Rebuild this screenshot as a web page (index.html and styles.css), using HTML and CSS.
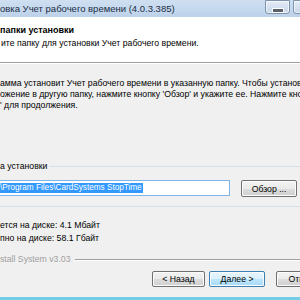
FILE: index.html
```html
<!DOCTYPE html>
<html lang="ru">
<head>
    <meta charset="UTF-8">
    <title>Установка Учет рабочего времени</title>
    <link rel="stylesheet" href="styles.css">
</head>
<body>
<div class="window">
  <div class="titlebar">
    <span class="title">овка Учет рабочего времени (4.0.3.385)</span>
    <div class="controls">
      <span class="ctl"><i class="ctl-min"></i></span>
      <span class="ctl"></span>
    </div>
  </div>

  <div class="header">
    <div class="header-title">папки установки</div>
    <div class="header-sub">ите папку для установки Учет рабочего времени.</div>
  </div>

  <div class="content">
    <div class="intro">
      <div>амма установит Учет рабочего времени в указанную папку. Чтобы установить</div>
      <div>ожение в другую папку, нажмите кнопку 'Обзор' и укажите ее. Нажмите кнопку</div>
      <div>' для продолжения.</div>
    </div>

    <fieldset class="group">
      <legend>а установки</legend>
      <div class="path-row">
        <div class="path"><span class="sel">\Program Files\CardSystems StopTime</span></div>
        <button class="btn browse">Обзор ...</button>
      </div>
    </fieldset>

    <div class="space">
      <div>ется на диске: 4.1 Мбайт</div>
      <div>пно на диске: 58.1 Гбайт</div>
    </div>

    <div class="brand">
      <span>stall System v3.03</span>
      <span class="rule"></span>
    </div>

    <div class="buttons">
      <button class="btn back">&lt; Назад</button>
      <button class="btn next">Далее &gt;</button>
      <button class="btn cancel">Отмена</button>
    </div>
  </div>
</div>
</body>
</html>
```

FILE: styles.css
```css
* {
  box-sizing: border-box;
}

body {
  margin: 0;
  width: 300px;
  height: 300px;
  overflow: hidden;
  background: #f0f0f0;
  font-family: "Liberation Sans", Arial, sans-serif;
  font-size: 8.7px;
  color: #000;
}

.window {
  width: 300px;
  height: 300px;
  border-bottom: 3px solid #72cde6;
  overflow: hidden;
}

/* title bar */
.titlebar {
  display: flex;
  height: 17px;
  background: linear-gradient(#cfdff1, #bcd2ea);
  overflow: hidden;
}

.title {
  flex: 1;
  padding-top: 3px;
  font-size: 9.5px;
  color: #1b2e44;
  white-space: nowrap;
}

.controls {
  display: flex;
  gap: 3px;
  width: 35px;
  overflow: hidden;
}

.ctl {
  flex-shrink: 0;
  display: flex;
  justify-content: center;
  width: 25px;
  height: 14px;
  border: 1px solid #7f93ac;
  border-radius: 0 0 3px 3px;
  background: linear-gradient(#e4ecf6, #c8d7ea);
  box-shadow: inset 0 0 0 1px rgba(255, 255, 255, 0.6);
}

.ctl-min {
  width: 10px;
  height: 3px;
  margin-top: 7px;
  background: #5a6270;
  border: 1px solid #fff;
  box-sizing: content-box;
}

/* header */
.header {
  height: 46px;
  padding-top: 7px;
  background: #fff;
  border-bottom: 1px solid #a0a0a0;
  box-shadow: 0 1px 0 #fff;
}

.header-title {
  font-size: 9px;
  font-weight: bold;
  line-height: 12px;
}

.header-sub {
  margin-top: 1px;
  padding-left: 1px;
  line-height: 12px;
}

/* body */
.intro {
  margin-top: 15px;
  line-height: 11px;
  white-space: nowrap;
}

.group {
  margin: 50px 0 0;
  padding: 9px 3px 9px 0;
  border: 1px solid #d5dfe5;
  border-left: none;
  border-right: none;
  width: 300px;
}

.group legend {
  padding: 0 2px 0 0;
  line-height: 10px;
}

.path-row {
  display: flex;
  gap: 11px;
}

.path {
  flex: 1;
  height: 16px;
  padding-top: 2px;
  background: #fff;
  border: 1px solid #7eb4ea;
  border-left: none;
  font-size: 8.2px;
  white-space: nowrap;
  overflow: hidden;
}

.sel {
  display: inline-block;
  line-height: 10px;
  background: #3399ff;
  color: #fff;
  padding-right: 1px;
}

.btn {
  flex-shrink: 0;
  height: 16px;
  padding: 0;
  font-family: "Liberation Sans", Arial, sans-serif;
  font-size: 8.7px;
  color: #000;
  border: 1px solid #707070;
  border-radius: 2px;
  background: linear-gradient(#f2f2f2 0%, #ebebeb 50%, #dddddd 51%, #cfcfcf 100%);
  box-shadow: inset 0 0 0 1px #fcfcfc;
}

.browse {
  width: 56px;
  height: 17px;
}

.space {
  margin-top: 12px;
  line-height: 13px;
}

.brand {
  display: flex;
  align-items: center;
  gap: 4px;
  margin-top: 9px;
  line-height: 10px;
  color: #a0a0a0;
}

.rule {
  flex: 1;
  border-top: 1px solid #a0a0a0;
  border-bottom: 1px solid #fff;
  margin-top: 2px;
}

.buttons {
  display: flex;
  margin-top: 7px;
  padding-left: 152px;
  white-space: nowrap;
}

.back {
  width: 53px;
}

.next {
  width: 56px;
  margin-left: 4px;
  border-color: #3c7fb1;
  background: linear-gradient(#eaf6fd 0%, #d9f0fc 50%, #bee6fd 51%, #a7d9f5 100%);
}

.cancel {
  width: 56px;
  margin-left: 11px;
}
```
